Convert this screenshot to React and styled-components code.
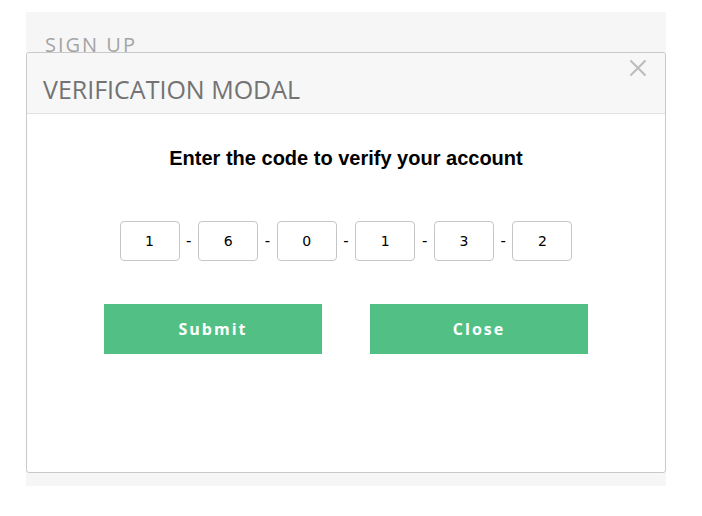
import React from "react";
import styled, { createGlobalStyle } from "styled-components";

const Global = createGlobalStyle`
  html, body { margin: 0; padding: 0; background: #fff; }
  body { font-family: "Open Sans", "DejaVu Sans", sans-serif; }
`;

const Page = styled.div`
  padding: 12px 0 0 26px;
`;

const Panel = styled.div`
  position: relative;
  width: 640px;
  height: 474px;
  background: #f6f6f6;
  box-sizing: border-box;
  padding: 21px 0 0 19px;
`;

const PanelTitle = styled.h2`
  margin: 0;
  font-family: "Open Sans", sans-serif;
  font-weight: 400;
  font-size: 20px;
  line-height: 24px;
  letter-spacing: 2px;
  color: #a4a4a4;
`;

const Modal = styled.div`
  position: absolute;
  top: 40px;
  left: 0;
  width: 640px;
  height: 421px;
  box-sizing: border-box;
  background: #fff;
  border: 1px solid #c9c9c9;
  border-radius: 3px;
  display: flex;
  flex-direction: column;
`;

const Header = styled.div`
  position: relative;
  height: 61px;
  box-sizing: border-box;
  background: #f7f7f7;
  border-bottom: 1px solid #e3e3e3;
  border-radius: 3px 3px 0 0;
  padding: 20px 0 0 16px;
`;

const HeaderTitle = styled.h1`
  margin: 0;
  font-family: "Open Sans", sans-serif;
  font-weight: 400;
  font-size: 25px;
  line-height: 32px;
  color: #737373;
`;

const CloseX = styled.button`
  position: absolute;
  top: 4px;
  right: 16px;
  width: 22px;
  height: 22px;
  padding: 0;
  border: 0;
  background: transparent;
  cursor: pointer;
  display: flex;
  align-items: center;
  justify-content: center;
`;

const Body = styled.div`
  display: flex;
  flex-direction: column;
  align-items: center;
  padding-top: 33px;
`;

const Prompt = styled.h3`
  margin: 0;
  font-family: "Liberation Sans", Arial, sans-serif;
  font-weight: 700;
  font-size: 20px;
  line-height: 22px;
  color: #000;
`;

const CodeRow = styled.div`
  display: flex;
  align-items: center;
  margin-top: 52px;
`;

const Digit = styled.div`
  width: 60px;
  height: 40px;
  box-sizing: border-box;
  border: 1px solid #c6c6c6;
  border-radius: 4px;
  display: flex;
  align-items: center;
  justify-content: center;
  font-family: "DejaVu Sans", Verdana, sans-serif;
  font-size: 14px;
  color: #000;
`;

const Dash = styled.span`
  width: 18.6px;
  text-align: center;
  font-family: "DejaVu Sans", sans-serif;
  font-size: 15px;
  color: #000;
`;

const Buttons = styled.div`
  display: flex;
  gap: 48px;
  margin-top: 43px;
`;

const GreenButton = styled.button`
  width: 218px;
  height: 50px;
  border: 0;
  background: #52c084;
  color: #fff;
  font-family: "Open Sans", sans-serif;
  font-weight: 700;
  font-size: 16px;
  letter-spacing: 2px;
  cursor: pointer;
`;

const code = ["1", "6", "0", "1", "3", "2"];

export default function App() {
  return (
    <>
      <Global />
      <Page>
        <Panel>
          <PanelTitle>SIGN UP</PanelTitle>
          <Modal>
            <Header>
              <HeaderTitle>VERIFICATION MODAL</HeaderTitle>
              <CloseX aria-label="close">
                <svg width="18" height="18" viewBox="0 0 18 18">
                  <path d="M1.5 1.5 L16.5 16.5 M16.5 1.5 L1.5 16.5" stroke="#bdbdbd" strokeWidth="2.2" fill="none" />
                </svg>
              </CloseX>
            </Header>
            <Body>
              <Prompt>Enter the code to verify your account</Prompt>
              <CodeRow>
                {code.map((d, i) => (
                  <React.Fragment key={i}>
                    {i > 0 && <Dash>-</Dash>}
                    <Digit>{d}</Digit>
                  </React.Fragment>
                ))}
              </CodeRow>
              <Buttons>
                <GreenButton>Submit</GreenButton>
                <GreenButton>Close</GreenButton>
              </Buttons>
            </Body>
          </Modal>
        </Panel>
      </Page>
    </>
  );
}
